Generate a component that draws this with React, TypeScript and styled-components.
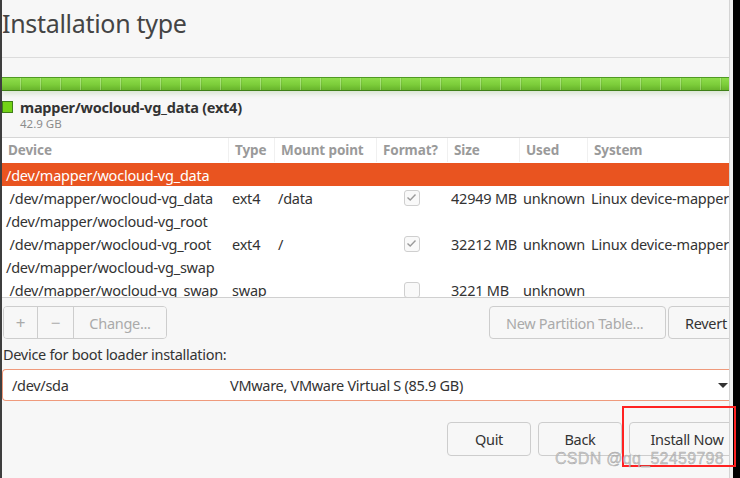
import React from 'react';
import styled, { createGlobalStyle } from 'styled-components';

const GlobalStyle = createGlobalStyle`
  html, body {
    margin: 0;
    padding: 0;
    background: #000;
  }
  body {
    font-family: "Noto Sans", "DejaVu Sans", sans-serif;
  }
`;

type Row = {
    device: string;
    type?: string;
    mount?: string;
    format?: 'on' | 'off';
    size?: string;
    used?: string;
    system?: string;
    selected?: boolean;
    child?: boolean;
};

const rows: Row[] = [
    { device: '/dev/mapper/wocloud-vg_data', selected: true },
    { device: '/dev/mapper/wocloud-vg_data', type: 'ext4', mount: '/data', format: 'on', size: '42949 MB', used: 'unknown', system: 'Linux device-mapper (linear)', child: true },
    { device: '/dev/mapper/wocloud-vg_root' },
    { device: '/dev/mapper/wocloud-vg_root', type: 'ext4', mount: '/', format: 'on', size: '32212 MB', used: 'unknown', system: 'Linux device-mapper (linear)', child: true },
    { device: '/dev/mapper/wocloud-vg_swap' },
    { device: '/dev/mapper/wocloud-vg_swap', type: 'swap', mount: '', format: 'off', size: '3221 MB', used: 'unknown', system: '', child: true },
];

const headers = ['Device', 'Type', 'Mount point', 'Format?', 'Size', 'Used', 'System'];

const App: React.FC = () => {
    return (
        <Screen>
            <GlobalStyle />
            <Window>
                <Title>Installation type</Title>
                <DiskBar />
                <Legend>
                    <Swatch />
                    <LegendText>
                        <strong>mapper/wocloud-vg_data (ext4)</strong>
                        <span>42.9 GB</span>
                    </LegendText>
                </Legend>
                <Table>
                    <HeaderRow>
                        {headers.map((h) => (
                            <HeaderCell key={h}>{h}</HeaderCell>
                        ))}
                    </HeaderRow>
                    {rows.map((r, i) => (
                        <BodyRow key={i} $selected={r.selected}>
                            <Cell>{r.child ? '\u00a0' + r.device : r.device}</Cell>
                            <Cell>{r.type}</Cell>
                            <Cell>{r.mount}</Cell>
                            <CheckCell>
                                {r.format && (
                                    <Check>
                                        {r.format === 'on' && (
                                            <svg width="11" height="9" viewBox="0 0 11 9">
                                                <path d="M1.5 4.5 L4.2 7 L9.5 1.5" fill="none" stroke="#9a9a9a" strokeWidth="1.4" />
                                            </svg>
                                        )}
                                    </Check>
                                )}
                            </CheckCell>
                            <Cell>{r.size}</Cell>
                            <Cell>{r.used}</Cell>
                            <Cell>{r.system}</Cell>
                        </BodyRow>
                    ))}
                </Table>
                <Toolbar>
                    <ButtonGroup>
                        <GroupButton $w={33} disabled>+</GroupButton>
                        <GroupButton $w={36} disabled>−</GroupButton>
                        <GroupButton $w={93} disabled>Change...</GroupButton>
                    </ButtonGroup>
                    <Spacer />
                    <ToolButton disabled $w={177}>New Partition Table...</ToolButton>
                    <ToolButton $w={77}>Revert</ToolButton>
                </Toolbar>
                <Label>Device for boot loader installation:</Label>
                <Combo>
                    <ComboDevice>/dev/sda</ComboDevice>
                    <ComboName>VMware, VMware Virtual S (85.9 GB)</ComboName>
                    <Arrow />
                </Combo>
                <Actions>
                    <ActionButton $w={84}>Quit</ActionButton>
                    <ActionButton $w={84}>Back</ActionButton>
                    <ActionButton $w={116}>Install Now</ActionButton>
                </Actions>
            </Window>
            <Gutter />
            <Highlight />
            <Watermark>CSDN @qq_52459798</Watermark>
        </Screen>
    );
};

// Styled Components
const Screen = styled.div`
    position: relative;
    display: flex;
    width: 740px;
    height: 478px;
    overflow: hidden;
    background: #000;
`;

const Window = styled.div`
    width: 727px;
    flex-shrink: 0;
    display: flex;
    flex-direction: column;
    background: #f7f7f7;
    border-left: 2px solid #3e3e3e;
    border-right: 1px solid #d4d4d4;
    overflow: hidden;
    color: #3c3c3c;
`;

const Gutter = styled.div`
    width: 3px;
    background: #efefef;
`;

const Title = styled.h1`
    margin: 0;
    padding: 8px 0 19px 0;
    height: 30px;
    font-size: 25px;
    line-height: 30px;
    font-weight: 400;
    color: #444;
    letter-spacing: -0.3px;
    border-bottom: 1px solid #dcdcdc;
`;

const DiskBar = styled.div`
    margin-top: 19px;
    height: 12px;
    border-top: 1px solid #4f9a22;
    border-bottom: 1px solid #3f7f18;
    background:
        repeating-linear-gradient(90deg, transparent 0 18px, rgba(255, 255, 255, 0.28) 18px 19px, rgba(0, 0, 0, 0.08) 19px 20px),
        linear-gradient(#8edd4b, #7ccd3a 55%, #68b42c);
    box-shadow: 0 3px 5px rgba(90, 150, 50, 0.18);
`;

const Legend = styled.div`
    display: flex;
    align-items: flex-start;
    gap: 7px;
    margin-top: 6px;
    height: 40px;
    border-bottom: 1px solid #d6d6d6;
`;

const Swatch = styled.div`
    width: 9px;
    height: 10px;
    margin-top: 4px;
    background: #73d216;
    border: 1px solid #3f7f18;
`;

const LegendText = styled.div`
    display: flex;
    flex-direction: column;

    strong {
        font-size: 14.5px;
        line-height: 20px;
        font-weight: 700;
        color: #333;
        letter-spacing: -0.25px;
    }

    span {
        font-size: 11.5px;
        line-height: 14px;
        color: #8c8c8c;
    }
`;

const Table = styled.div`
    height: 159px;
    overflow: hidden;
    background: #fff;
    border-bottom: 1px solid #d0d0d0;
`;

const columns = '226px 46px 102px 71px 72px 68px 1fr';

const HeaderRow = styled.div`
    display: grid;
    grid-template-columns: ${columns};
    height: 24px;
    padding-bottom: 1px;
    background: #fff;
`;

const HeaderCell = styled.div`
    display: flex;
    align-items: center;
    padding-left: 6px;
    font-size: 13.5px;
    font-weight: 700;
    color: #9a9a9a;
    letter-spacing: -0.1px;
    border-left: 1px solid #f0f0f0;

    &:first-child {
        border-left: none;
    }
`;

const BodyRow = styled.div<{ $selected?: boolean }>`
    display: grid;
    grid-template-columns: ${columns};
    height: 23px;
    background: ${(p) => (p.$selected ? '#e95420' : '#fff')};
    color: ${(p) => (p.$selected ? '#fff' : '#333')};
`;

const Cell = styled.div`
    display: flex;
    align-items: center;
    padding-left: 4px;
    font-size: 14.5px;
    letter-spacing: -0.22px;
    white-space: nowrap;
    overflow: hidden;
`;

const CheckCell = styled.div`
    display: flex;
    align-items: center;
    justify-content: center;
`;

const Check = styled.div`
    width: 14px;
    height: 14px;
    border: 1px solid #cfcfcf;
    border-radius: 3px;
    background: #f9f9f9;
    display: flex;
    align-items: center;
    justify-content: center;
`;

const Toolbar = styled.div`
    display: flex;
    align-items: flex-start;
    padding: 8px 0 0 1px;
    height: 33px;
`;

const ButtonGroup = styled.div`
    display: flex;
    border: 1px solid #cdcdcd;
    border-radius: 4px;
    overflow: hidden;
`;

const GroupButton = styled.button<{ $w: number }>`
    width: ${(p) => p.$w}px;
    height: 31px;
    border: none;
    border-left: 1px solid #cdcdcd;
    background: #f7f7f7;
    color: #aaa;
    font-family: inherit;
    font-size: 14.5px;
    letter-spacing: -0.3px;

    &:first-child {
        border-left: none;
        font-size: 17px;
    }
    &:nth-child(2) {
        font-size: 17px;
    }
`;

const Spacer = styled.div`
    flex: 1;
`;

const ToolButton = styled.button<{ $w: number }>`
    width: ${(p) => p.$w}px;
    height: 33px;
    margin-left: 2px;
    flex-shrink: 0;
    border: 1px solid #cdcdcd;
    border-radius: 4px;
    background: #f7f7f7;
    color: ${(p) => (p.disabled ? '#aaa' : '#333')};
    font-family: inherit;
    font-size: 14.5px;
    letter-spacing: -0.3px;
    text-align: left;
    padding-left: 16px;

    &:last-child {
        margin-right: -16px;
    }
`;

const Label = styled.div`
    margin-top: 4px;
    padding-left: 1px;
    height: 23px;
    line-height: 23px;
    font-size: 14.5px;
    letter-spacing: -0.3px;
    color: #333;
`;

const Combo = styled.div`
    display: flex;
    align-items: center;
    margin-top: 3px;
    height: 30px;
    border: 1px solid #ef9a7c;
    border-right: none;
    border-radius: 4px 0 0 4px;
    background: #fff;
    font-size: 14.5px;
    letter-spacing: -0.3px;
    color: #333;
`;

const ComboDevice = styled.span`
    width: 218px;
    padding-left: 9px;
`;

const ComboName = styled.span`
    flex: 1;
`;

const Arrow = styled.span`
    width: 0;
    height: 0;
    margin-right: 1px;
    border-left: 5px solid transparent;
    border-right: 5px solid transparent;
    border-top: 5px solid #333;
`;

const Actions = styled.div`
    display: flex;
    justify-content: flex-end;
    gap: 7px;
    margin-top: 21px;
    margin-right: -16px;
`;

const ActionButton = styled.button<{ $w: number }>`
    width: ${(p) => p.$w}px;
    height: 34px;
    flex-shrink: 0;
    border: 1px solid #cdcdcd;
    border-radius: 4px;
    background: #f7f7f7;
    color: #333;
    font-family: inherit;
    font-size: 14.5px;
    letter-spacing: -0.3px;
`;

const Highlight = styled.div`
    position: absolute;
    left: 622px;
    top: 406px;
    width: 110px;
    height: 57px;
    border: 2px solid #ff2222;
    pointer-events: none;
`;

const Watermark = styled.div`
    position: absolute;
    left: 555px;
    top: 450px;
    font-family: "Liberation Sans", Arial, sans-serif;
    font-size: 16px;
    letter-spacing: 0.3px;
    color: rgba(200, 200, 200, 0.9);
    -webkit-text-stroke: 0.4px rgba(120, 120, 120, 0.6);
    pointer-events: none;
`;

export default App;
